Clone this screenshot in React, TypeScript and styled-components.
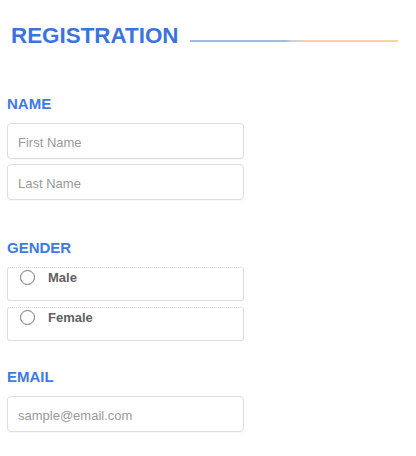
import React from "react";
import styled, { createGlobalStyle } from "styled-components";

const Global = createGlobalStyle`
  html, body { margin: 0; padding: 0; background: #ffffff; }
  body { font-family: "Liberation Sans", Arial, sans-serif; }
  * { box-sizing: border-box; }
`;

const Page = styled.div`
  width: 416px;
  height: 456px;
  padding: 25px 18px 0 7px;
  display: flex;
  flex-direction: column;
`;

const Header = styled.div`
  display: flex;
  align-items: flex-end;
  gap: 11px;
  padding-left: 4px;
`;

const Title = styled.h1`
  margin: 0;
  font-size: 22.4px;
  line-height: 22px;
  font-weight: 700;
  color: #3b74de;
  letter-spacing: 0;
`;

const Rule = styled.div`
  flex: 1;
  height: 2px;
  margin-bottom: 5px;
  background: linear-gradient(
    to right,
    #9cbaf0 0%,
    #9cbaf0 46%,
    #cdd0d6 49%,
    #d2d2d2 53%,
    #f8d3a2 55%,
    #f8d3a2 100%
  );
`;

const Section = styled.section<{ $top: number }>`
  margin-top: ${(p) => p.$top}px;
  display: flex;
  flex-direction: column;
`;

const Label = styled.div`
  font-size: 15px;
  line-height: 15px;
  font-weight: 700;
  color: #3f7ae4;
  margin-bottom: 12px;
`;

const Fields = styled.div<{ $gap: number }>`
  display: flex;
  flex-direction: column;
  gap: ${(p) => p.$gap}px;
`;

const Input = styled.input`
  width: 237px;
  height: 36px;
  border: 1px solid #dedede;
  border-radius: 4px;
  padding: 2px 10px 0;
  font-family: "Liberation Sans", Arial, sans-serif;
  font-size: 13px;
  color: #333;
  background: #fff;
  box-shadow: 0 1px 1px rgba(0, 0, 0, 0.03);
  outline: none;
  &::placeholder { color: #9a9a9a; }
`;

const RadioBox = styled.label`
  width: 237px;
  height: 34px;
  border: 1px solid #dcdcdc;
  border-top-style: dotted;
  border-radius: 3px;
  display: flex;
  align-items: flex-start;
  gap: 13px;
  padding: 2px 0 0 12px;
  cursor: pointer;
`;

const Circle = styled.span`
  width: 15px;
  height: 15px;
  border-radius: 50%;
  border: 1.5px solid #757575;
  flex-shrink: 0;
`;

const RadioText = styled.span`
  font-size: 13px;
  line-height: 15px;
  font-weight: 700;
  color: #5f5f5f;
`;

export default function App() {
  return (
    <>
      <Global />
      <Page>
        <Header>
          <Title>REGISTRATION</Title>
          <Rule />
        </Header>

        <Section $top={49}>
          <Label>NAME</Label>
          <Fields $gap={5}>
            <Input placeholder="First Name" />
            <Input placeholder="Last Name" />
          </Fields>
        </Section>

        <Section $top={40}>
          <Label>GENDER</Label>
          <Fields $gap={6}>
            <RadioBox>
              <Circle />
              <RadioText>Male</RadioText>
            </RadioBox>
            <RadioBox>
              <Circle />
              <RadioText>Female</RadioText>
            </RadioBox>
          </Fields>
        </Section>

        <Section $top={28}>
          <Label>EMAIL</Label>
          <Fields $gap={5}>
            <Input placeholder="sample@email.com" />
          </Fields>
        </Section>
      </Page>
    </>
  );
}
